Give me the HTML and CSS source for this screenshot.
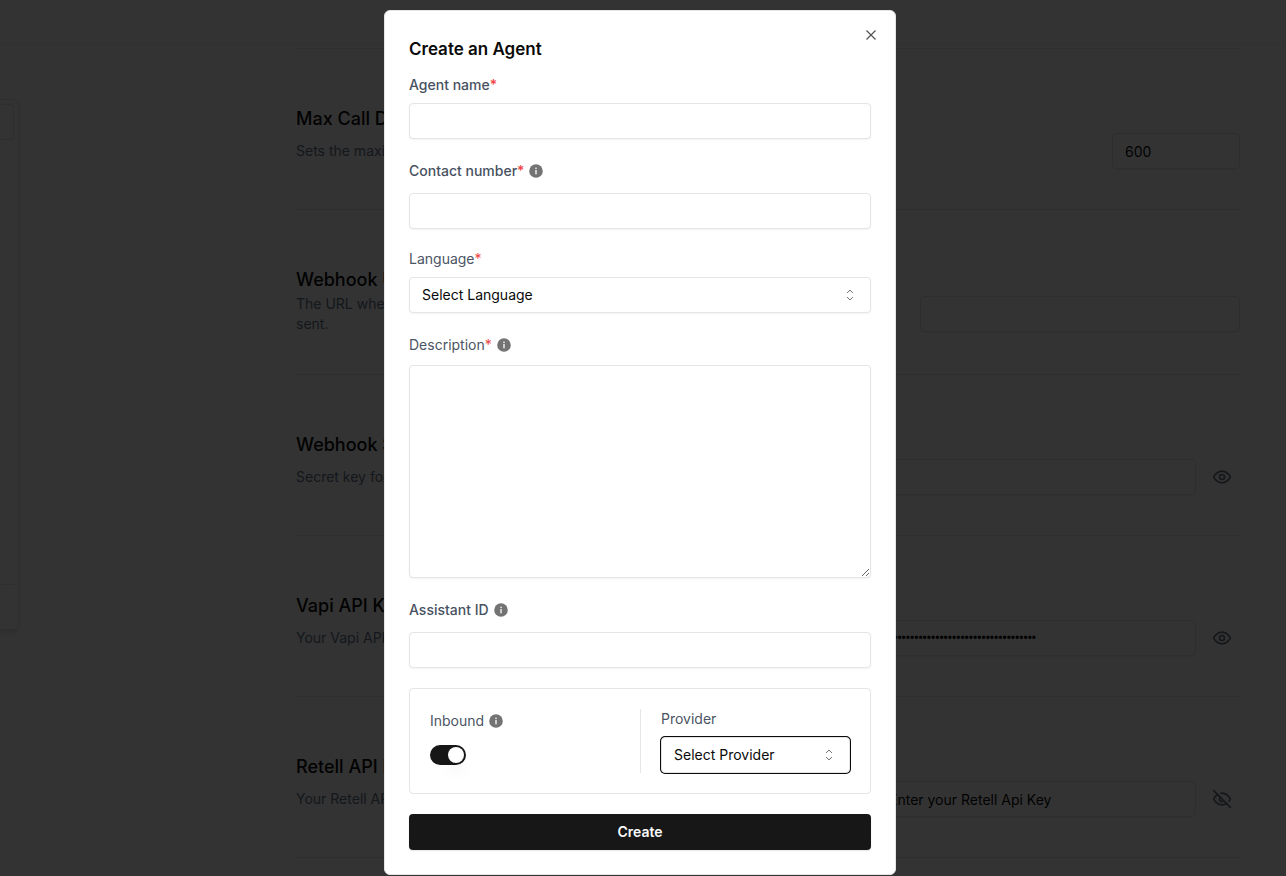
FILE: index.html
```html
<!DOCTYPE html>
<html lang="en">
<head>
    <meta charset="UTF-8">
    <meta name="viewport" content="width=device-width, initial-scale=1.0">
    <title>Create an Agent</title>
    <link rel="stylesheet" href="styles.css">
</head>
<body>
    <!-- settings page behind the dialog -->
    <div class="page">
        <header class="topbar"></header>
        <div class="page-body">
            <aside class="sidebar">
                <div class="side-panel">
                    <div class="side-search"></div>
                    <div class="side-footer"></div>
                </div>
            </aside>
            <main class="settings">
                <section class="setting">
                    <h2>Max Call Duration</h2>
                    <div class="setting-row">
                        <p>Sets the maximum call duration in seconds.</p>
                        <input class="input input-short" type="text" value="600" aria-label="Max call duration">
                    </div>
                </section>
                <section class="setting">
                    <h2>Webhook URL</h2>
                    <div class="setting-row">
                        <p>The URL where all of the call events and reports will be<br>sent.</p>
                        <input class="input input-long" type="text" aria-label="Webhook URL">
                    </div>
                </section>
                <section class="setting">
                    <h2>Webhook Secret</h2>
                    <div class="setting-row">
                        <p>Secret key for your webhook.</p>
                        <div class="secret">
                            <input class="input input-long" type="password" aria-label="Webhook secret">
                            <button class="eye-btn" type="button" aria-label="Show">
                                <svg viewBox="0 0 24 24"><path d="M2 12s3-7 10-7 10 7 10 7-3 7-10 7-10-7-10-7Z"/><circle cx="12" cy="12" r="3"/></svg>
                            </button>
                        </div>
                    </div>
                </section>
                <section class="setting">
                    <h2>Vapi API Key</h2>
                    <div class="setting-row">
                        <p>Your Vapi API key.</p>
                        <div class="secret">
                            <input class="input input-long masked" type="password" value="0000000-0000-0000-0000-000000000000" aria-label="Vapi API key">
                            <button class="eye-btn" type="button" aria-label="Show">
                                <svg viewBox="0 0 24 24"><path d="M2 12s3-7 10-7 10 7 10 7-3 7-10 7-10-7-10-7Z"/><circle cx="12" cy="12" r="3"/></svg>
                            </button>
                        </div>
                    </div>
                </section>
                <section class="setting">
                    <h2>Retell API Key</h2>
                    <div class="setting-row">
                        <p>Your Retell API key.</p>
                        <div class="secret">
                            <input class="input input-long" type="text" value="Enter your Retell Api Key" aria-label="Retell API key">
                            <button class="eye-btn" type="button" aria-label="Hide">
                                <svg viewBox="0 0 24 24"><path d="M9.88 9.88a3 3 0 1 0 4.24 4.24"/><path d="M10.73 5.08A10.43 10.43 0 0 1 12 5c7 0 10 7 10 7a13.16 13.16 0 0 1-1.67 2.68"/><path d="M6.61 6.61A13.526 13.526 0 0 0 2 12s3 7 10 7a9.74 9.74 0 0 0 5.39-1.61"/><path d="m2 2 20 20"/></svg>
                            </button>
                        </div>
                    </div>
                </section>
                <section class="setting"></section>
            </main>
        </div>
    </div>

    <!-- shared icons -->
    <svg class="sprite" aria-hidden="true">
        <symbol id="info" viewBox="0 0 14 14">
            <circle cx="7" cy="7" r="6.8" fill="#737373"/>
            <rect x="6.2" y="3.6" width="1.6" height="1.5" fill="#e5e5e5"/>
            <rect x="6.2" y="6" width="1.6" height="4.3" fill="#e5e5e5"/>
        </symbol>
        <symbol id="caret" viewBox="0 0 15 15">
            <path d="M5 5.3 7.5 2.9 10 5.3M5 9.7l2.5 2.4L10 9.7" fill="none" stroke="currentColor" stroke-width="0.9" stroke-linecap="round" stroke-linejoin="round"/>
        </symbol>
    </svg>

    <!-- dialog -->
    <div class="overlay">
        <div class="dialog" role="dialog" aria-labelledby="dialogTitle">
            <button class="close-btn" type="button" aria-label="Close">
                <svg viewBox="0 0 16 16"><path d="M3.5 3.5l9 9M12.5 3.5l-9 9"/></svg>
            </button>
            <h1 id="dialogTitle">Create an Agent</h1>
            <form class="agent-form">
                <div class="field">
                    <label class="strong" for="agentName">Agent name<span class="required">*</span></label>
                    <input class="input" type="text" id="agentName">
                </div>
                <div class="field field-info">
                    <label class="strong" for="contactNumber">Contact number<span class="required">*</span><svg class="info"><use href="#info"/></svg></label>
                    <input class="input" type="text" id="contactNumber">
                </div>
                <div class="field">
                    <label for="language">Language<span class="required">*</span></label>
                    <div class="select-wrap">
                        <select class="input" id="language">
                            <option>Select Language</option>
                        </select>
                        <svg class="caret"><use href="#caret"/></svg>
                    </div>
                </div>
                <div class="field">
                    <label class="tall" for="description">Description<span class="required">*</span><svg class="info"><use href="#info"/></svg></label>
                    <textarea class="input" id="description"></textarea>
                </div>
                <div class="field field-info">
                    <label class="strong" for="assistantId">Assistant ID<svg class="info"><use href="#info"/></svg></label>
                    <input class="input" type="text" id="assistantId">
                </div>
                <div class="options">
                    <div class="option field-info">
                        <label for="inbound">Inbound<svg class="info"><use href="#info"/></svg></label>
                        <input class="switch" type="checkbox" role="switch" id="inbound" checked>
                    </div>
                    <div class="option field">
                        <label for="provider">Provider</label>
                        <div class="select-wrap">
                            <select class="input active" id="provider">
                                <option>Select Provider</option>
                            </select>
                            <svg class="caret"><use href="#caret"/></svg>
                        </div>
                    </div>
                </div>
                <button class="create-btn" type="submit">Create</button>
            </form>
        </div>
    </div>
</body>
</html>
```
FILE: styles.css
```css
* {
    box-sizing: border-box;
}

body {
    margin: 0;
    overflow: hidden;
    font-family: Inter, "Liberation Sans", sans-serif;
    font-size: 14px;
    line-height: 20px;
    color: #0a0a0a;
    background-color: #fff;
}

h1,
h2,
p {
    margin: 0;
}

.input {
    display: block;
    width: 100%;
    height: 36px;
    padding: 0 12px;
    font: inherit;
    color: inherit;
    background-color: #fff;
    border: 1px solid #e5e5e5;
    border-radius: 4px;
    box-shadow: 0 1px 2px rgba(0, 0, 0, 0.05);
    outline: none;
}

/* settings page */
.page {
    height: 100vh;
    overflow: hidden;
}

.topbar {
    height: 44px;
    border-bottom: 1px solid #f5f5f5;
}

.page-body {
    display: flex;
}

.sidebar {
    flex: none;
    width: 296px;
    padding-top: 55px;
}

.side-panel {
    display: flex;
    flex-direction: column;
    justify-content: space-between;
    width: 19px;
    height: 531px;
    padding: 4px 4px 0 0;
    border: 1px solid #e5e5e5;
    border-left: none;
    border-radius: 0 6px 6px 0;
    box-shadow: 0 4px 6px rgba(0, 0, 0, 0.1);
}

.side-search {
    height: 36px;
    border: 1px solid #e5e5e5;
    border-left: none;
    border-radius: 0 4px 4px 0;
}

.side-footer {
    height: 45px;
    border-top: 1px solid #e5e5e5;
}

.settings {
    flex: 1;
    padding: 4px 46px 0 0;
}

.setting {
    padding: 56px 0 40px;
    border-top: 1px solid #e5e5e5;
}

.setting h2 {
    font-size: 18px;
    font-weight: 500;
    line-height: 28px;
}

.setting-row {
    display: flex;
    align-items: center;
    justify-content: space-between;
    min-height: 36px;
}

.setting-row p {
    color: #64748b;
}

.input-short {
    width: 128px;
}

.input-long {
    width: 320px;
}

.masked {
    font-family: "Liberation Sans", sans-serif;
    font-size: 12px;
}

.secret {
    display: flex;
    gap: 8px;
}

.eye-btn {
    display: flex;
    align-items: center;
    justify-content: center;
    width: 36px;
    height: 36px;
    padding: 0;
    background: none;
    border: none;
}

.eye-btn svg {
    width: 20px;
    height: 20px;
    fill: none;
    stroke: #6b7280;
    stroke-width: 2;
    stroke-linecap: round;
    stroke-linejoin: round;
}

.sprite {
    position: absolute;
    width: 0;
    height: 0;
}

/* dialog */
.overlay {
    position: fixed;
    inset: 0;
    display: flex;
    align-items: flex-start;
    justify-content: center;
    padding: 10px 6px 0 0;
    background-color: rgba(0, 0, 0, 0.8);
}

.dialog {
    position: relative;
    width: 100%;
    max-width: 512px;
    padding: 24px;
    background-color: #fff;
    border: 1px solid #e5e5e5;
    border-radius: 6px;
}

.dialog h1 {
    margin-bottom: 12px;
    font-size: 17px;
    font-weight: 600;
    line-height: 28px;
}

.close-btn {
    position: absolute;
    top: 16px;
    right: 16px;
    display: flex;
    padding: 0;
    background: none;
    border: none;
    opacity: 0.7;
}

.close-btn svg {
    width: 16px;
    height: 16px;
    fill: none;
    stroke: #0a0a0a;
    stroke-width: 1.2;
}

.agent-form {
    display: flex;
    flex-direction: column;
    gap: 20px;
}

.agent-form label {
    display: flex;
    align-items: center;
    margin-bottom: 8px;
    color: #4b5563;
}

.agent-form label.strong {
    font-weight: 500;
    color: #475161;
}

.agent-form label.tall {
    height: 24px;
}

.agent-form .field-info label {
    height: 24px;
    margin-bottom: 10px;
}

.required {
    color: #ef4444;
}

.info {
    width: 14px;
    height: 14px;
    margin-left: 5px;
}

textarea.input {
    height: 213px;
    padding: 8px 12px;
    resize: vertical;
}

.select-wrap {
    position: relative;
}

select.input {
    appearance: none;
}

.input.active {
    box-shadow: 0 0 0 1px #0a0a0a;
}

.caret {
    position: absolute;
    top: 10px;
    right: 13px;
    width: 16px;
    height: 16px;
    opacity: 0.6;
    pointer-events: none;
}

.options {
    display: grid;
    grid-template-columns: 1fr 1fr;
    padding: 20px;
    border: 1px solid #e5e5e5;
    border-radius: 4px;
}

.option + .option {
    padding-left: 20px;
    border-left: 1px solid #e5e7eb;
}

.switch {
    display: block;
    width: 36px;
    height: 20px;
    margin: 12px 0 0;
    padding: 2px;
    appearance: none;
    background-color: #171717;
    border-radius: 10px;
}

.switch::before {
    content: "";
    display: block;
    width: 16px;
    height: 16px;
    margin-left: auto;
    background-color: #fff;
    border-radius: 50%;
    box-shadow: 0 10px 15px -3px rgba(0, 0, 0, 0.1);
}

.create-btn {
    height: 36px;
    font: inherit;
    font-weight: 600;
    color: #fafafa;
    background-color: #171717;
    border: none;
    border-radius: 4px;
    box-shadow: 0 1px 2px rgba(0, 0, 0, 0.1);
}
```
